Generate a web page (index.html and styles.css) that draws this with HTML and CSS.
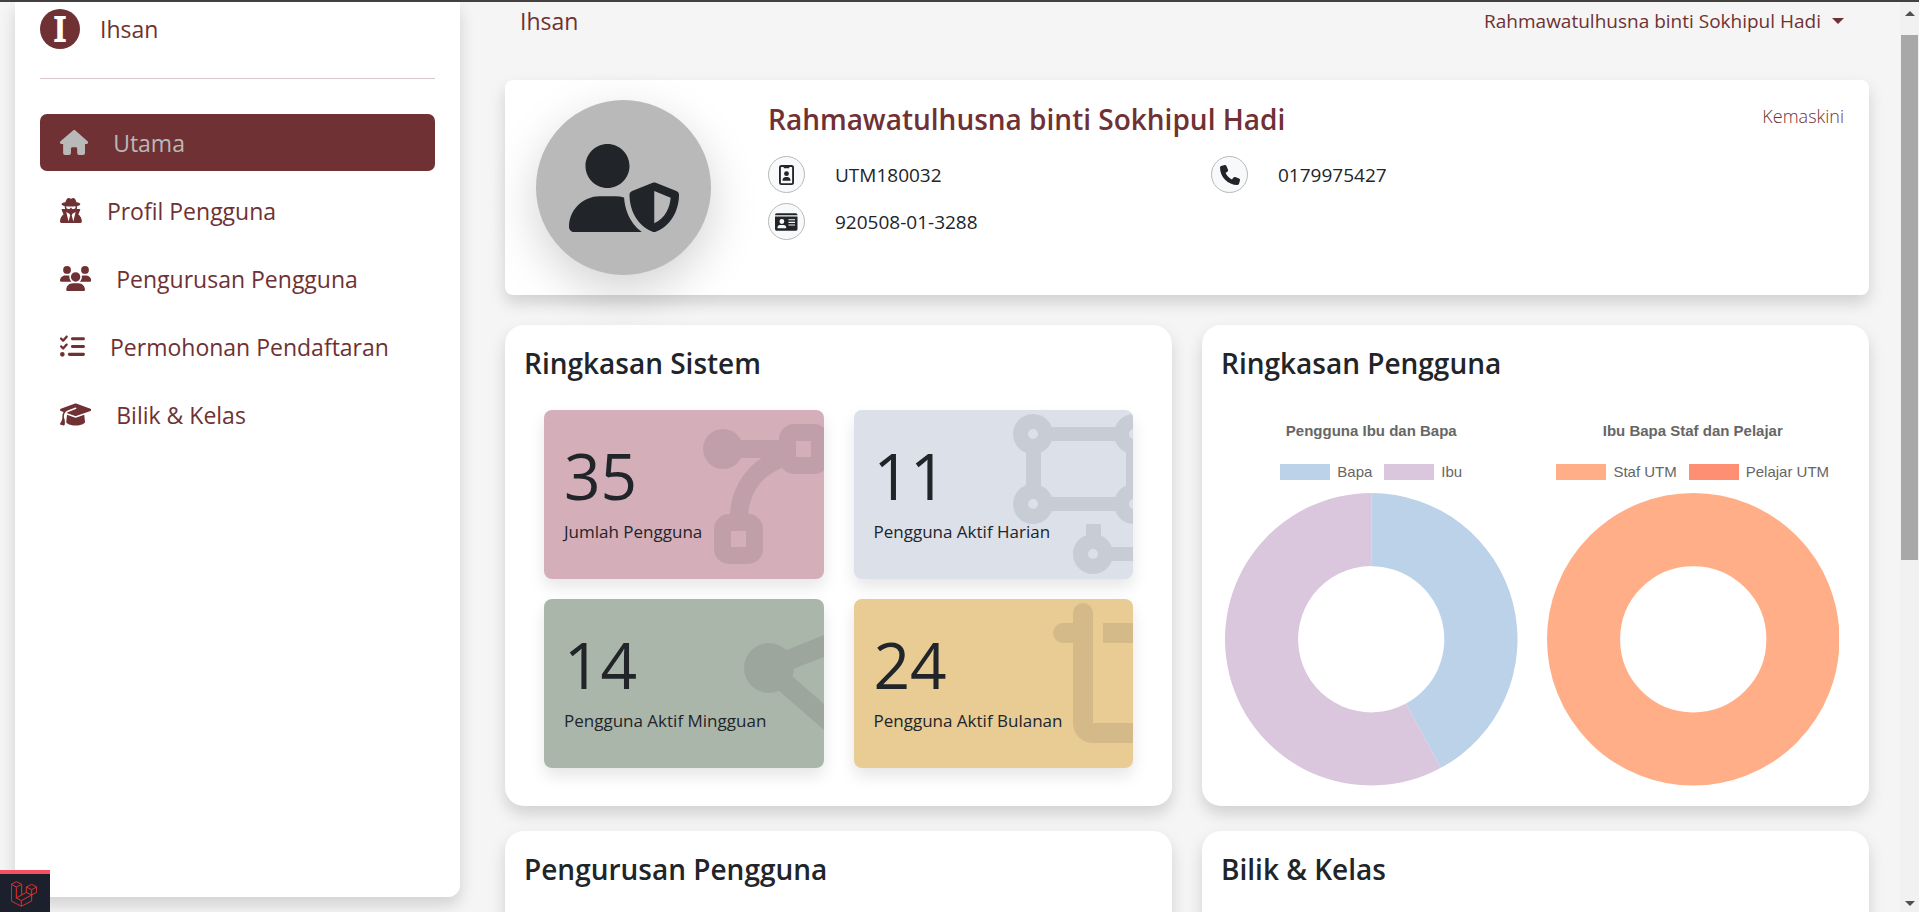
FILE: index.html
```html
<!DOCTYPE html>
<html lang="ms">
<head>
<meta charset="utf-8">
<meta name="viewport" content="width=device-width, initial-scale=1">
<title>Ihsan</title>
<link rel="stylesheet" href="styles.css">
</head>
<body>
<div class="shell">
  <div class="page">
    <div class="side-col">
      <aside class="sidebar">
        <a class="brand" href="#"><span class="brand-mark">I</span><span>Ihsan</span></a>
        <hr class="divider">
        <nav class="nav">
          <a class="nav-link active" href="#"><svg class="nav-icon" viewBox="0 0 576 512"><path d="M575.8 255.5c0 18-15 32.1-32 32.1h-32l.7 160.2c0 2.7-.2 5.4-.5 8.1V472c0 22.1-17.9 40-40 40H456c-1.1 0-2.2 0-3.3-.1c-1.4 .1-2.8 .1-4.2 .1H416 392c-22.1 0-40-17.9-40-40V448 384c0-17.7-14.3-32-32-32H256c-17.7 0-32 14.3-32 32v64 24c0 22.1-17.9 40-40 40H160 128.1c-1.5 0-3-.1-4.5-.2c-1.2 .1-2.4 .2-3.6 .2H104c-22.1 0-40-17.9-40-40V360c0-.9 0-1.9 .1-2.8V287.6H32c-18 0-32-14-32-32.1c0-9 3-17 10-24L266.4 8c7-7 15-8 22-8s15 2 21 7L564.8 231.5c8 7 12 15 11 24z"/></svg><span>Utama</span></a>
          <a class="nav-link" href="#"><svg class="nav-icon" viewBox="0 0 448 512"><path d="M224 16c-6.7 0-10.8-2.8-15.5-6.1C201.9 5.4 194 0 176 0c-30.5 0-52 43.7-66 89.4C62.7 98.1 32 112.2 32 128c0 14.3 25 27.1 64.6 35.9c-.4 4-.6 8-.6 12.1c0 17 3.3 33.2 9.3 48H45.4C38 224 32 230 32 237.4c0 1.7 .3 3.4 1 5l38.8 96.9C28.2 371.8 0 423.8 0 482.3C0 498.7 13.3 512 29.7 512H418.3c16.4 0 29.7-13.3 29.7-29.7c0-58.5-28.2-110.4-71.7-143L415 242.4c.6-1.6 1-3.3 1-5c0-7.4-6-13.4-13.4-13.4H342.7c6-14.8 9.3-31 9.3-48c0-4.1-.2-8.1-.6-12.1C391 155.1 416 142.3 416 128c0-15.8-30.7-29.9-78-38.6C324 43.7 302.5 0 272 0c-18 0-25.9 5.4-32.5 9.9c-4.8 3.3-8.8 6.1-15.5 6.1zm56 208H267.6c-16.5 0-31.1-10.6-36.3-26.2c-2.3-7-12.2-7-14.5 0c-5.2 15.6-19.9 26.2-36.3 26.2H168c-22.1 0-40-17.9-40-40V169.6c28.2 4.1 61 6.4 96 6.4s67.8-2.3 96-6.4V184c0 22.1-17.9 40-40 40zm-88 96l16 32L176 480 128 288l64 32zm128-32L272 480 240 352l16-32 64-32z"/></svg><span>Profil Pengguna</span></a>
          <a class="nav-link" href="#"><svg class="nav-icon" viewBox="0 0 640 512"><path d="M144 0a80 80 0 1 1 0 160A80 80 0 1 1 144 0zM512 0a80 80 0 1 1 0 160A80 80 0 1 1 512 0zM0 298.7C0 239.8 47.8 192 106.7 192h42.7c15.9 0 31 3.5 44.6 9.7c-1.3 7.2-1.9 14.7-1.9 22.3c0 38.2 16.8 72.5 43.3 96c-.2 0-.4 0-.7 0H21.3C9.6 320 0 310.4 0 298.7zM405.3 320c-.2 0-.4 0-.7 0c26.6-23.5 43.3-57.8 43.3-96c0-7.6-.7-15-1.9-22.3c13.6-6.3 28.7-9.7 44.6-9.7h42.7C592.2 192 640 239.8 640 298.7c0 11.8-9.6 21.3-21.3 21.3H405.3zM224 224a96 96 0 1 1 192 0 96 96 0 1 1 -192 0zM128 485.3C128 411.7 187.7 352 261.3 352H378.7C452.3 352 512 411.7 512 485.3c0 14.7-11.9 26.7-26.7 26.7H154.7c-14.7 0-26.7-11.9-26.7-26.7z"/></svg><span>Pengurusan Pengguna</span></a>
          <a class="nav-link" href="#"><svg class="nav-icon" viewBox="0 0 512 512"><path d="M152.1 38.2c9.9 8.9 10.7 24 1.8 33.9l-72 80c-4.4 4.9-10.6 7.8-17.2 7.9s-12.9-2.4-17.6-7L7 113C-2.3 103.6-2.3 88.4 7 79s24.6-9.4 33.9 0l22.1 22.1 55.1-61.2c8.9-9.9 24-10.7 33.9-1.8zm0 160c9.9 8.9 10.7 24 1.8 33.9l-72 80c-4.4 4.9-10.6 7.8-17.2 7.9s-12.9-2.4-17.6-7L7 273c-9.4-9.4-9.4-24.6 0-33.9s24.6-9.4 33.9 0l22.1 22.1 55.1-61.2c8.9-9.9 24-10.7 33.9-1.8zM224 96c0-17.7 14.3-32 32-32H480c17.7 0 32 14.3 32 32s-14.3 32-32 32H256c-17.7 0-32-14.3-32-32zm0 160c0-17.7 14.3-32 32-32H480c17.7 0 32 14.3 32 32s-14.3 32-32 32H256c-17.7 0-32-14.3-32-32zM160 416c0-17.7 14.3-32 32-32H480c17.7 0 32 14.3 32 32s-14.3 32-32 32H192c-17.7 0-32-14.3-32-32zM48 368a48 48 0 1 1 0 96 48 48 0 1 1 0-96z"/></svg><span>Permohonan Pendaftaran</span></a>
          <a class="nav-link" href="#"><svg class="nav-icon" viewBox="0 0 640 512"><path d="M320 32c-8.1 0-16.1 1.4-23.7 4.1L15.8 137.4C6.3 140.9 0 149.9 0 160s6.3 19.1 15.8 22.6l57.9 20.9C57.3 229.3 48 259.8 48 291.9v28.1c0 28.4-10.8 57.7-22.3 80.8c-6.5 13-13.9 25.8-22.5 37.6C0 442.7-.9 448.3 .9 453.4s6 8.9 11.2 10.2l64 16c4.2 1.1 8.7 .3 12.4-2s6.3-6.1 7.1-10.4c8.6-42.8 4.3-81.2-2.1-108.7C90.3 344.3 86 329.8 80 316.5V291.9c0-30.2 10.2-58.7 27.9-81.5c12.9-15.5 29.6-28 49.2-35.7l157-61.7c8.2-3.2 17.5 .8 20.7 9s-.8 17.5-9 20.7l-157 61.7c-12.4 4.9-23.3 12.4-32.2 21.6l159.6 57.6c7.6 2.7 15.6 4.1 23.7 4.1s16.1-1.4 23.7-4.1L624.2 182.6c9.5-3.4 15.8-12.5 15.8-22.6s-6.3-19.1-15.8-22.6L343.7 36.1C336.1 33.4 328.1 32 320 32zM128 408c0 35.3 86 72 192 72s192-36.7 192-72L496.7 262.6 354.5 314c-11.1 4-22.8 6-34.5 6s-23.5-2-34.5-6L143.3 262.6 128 408z"/></svg><span>Bilik &amp; Kelas</span></a>
        </nav>
      </aside>
    </div>
    <main class="main">
      <header class="topbar">
        <a class="topbar-title" href="#">Ihsan</a>
        <button class="user-menu" type="button">Rahmawatulhusna binti Sokhipul Hadi<span class="caret"></span></button>
      </header>

      <section class="profile">
        <div class="avatar"><svg class="avatar-icon" viewBox="0 0 640 512"><path d="M224 256c70.7 0 128-57.3 128-128S294.7 0 224 0S96 57.3 96 128s57.3 128 128 128zm-45.7 48C79.8 304 0 383.8 0 482.3C0 498.7 13.3 512 29.7 512H418.3c1.8 0 3.5-.2 5.3-.5c-76.3-55.1-99.8-141-103.1-200.2c-16.1-4.8-33.1-7.3-50.7-7.3H178.3zm308.8-78.3l-120 48C358 277.4 352 286.2 352 296c0 63.3 25.9 168.8 134.8 214.2c5.9 2.5 12.6 2.5 18.5 0C614.1 464.8 640 359.3 640 296c0-9.8-6-18.6-15.1-22.3l-120-48c-5.7-2.3-12.1-2.3-17.8 0zM591.4 312c-3.9 50.7-27.2 116.7-95.4 149.7V273.8L591.4 312z"/></svg></div>
        <div class="profile-body">
          <div class="profile-head">
            <h1 class="profile-name">Rahmawatulhusna binti Sokhipul Hadi</h1>
            <a class="edit-link" href="#">Kemaskini</a>
          </div>
          <div class="facts">
            <div class="fact"><span class="fact-icon"><svg viewBox="0 0 384 512"><rect x="24" y="24" width="336" height="464" rx="40" fill="none" stroke="currentColor" stroke-width="48"/><path d="M120 20h144v48a16 16 0 0 1-16 16H136a16 16 0 0 1-16-16z"/><circle cx="192" cy="222" r="62"/><path d="M88 392c0-50 36-86 84-86h40c48 0 84 36 84 86 0 8-6 14-14 14H102c-8 0-14-6-14-14z"/></svg></span><span>UTM180032</span></div>
            <div class="fact"><span class="fact-icon"><svg viewBox="0 0 512 512"><path d="M164.9 24.6c-7.7-18.6-28-28.5-47.4-23.2l-88 24C12.1 30.2 0 46 0 64C0 311.4 200.6 512 448 512c18 0 33.8-12.1 38.6-29.5l24-88c5.3-19.4-4.6-39.7-23.2-47.4l-96-40c-16.3-6.8-35.2-2.1-46.3 11.6L304.7 368C234.3 334.7 177.3 277.7 144 207.3L193.3 167c13.7-11.2 18.4-30 11.6-46.3l-40-96z"/></svg></span><span>0179975427</span></div>
            <div class="fact"><span class="fact-icon"><svg viewBox="0 0 576 512"><path fill-rule="evenodd" d="M48 32h480c27 0 48 21 48 48H0c0-27 21-48 48-48zM0 118h576v314c0 27-21 48-48 48H48c-27 0-48-21-48-48zM176 182a62 62 0 1 0 0 124 62 62 0 1 0 0-124zM64 402c0 8 6 14 14 14h196c8 0 14-6 14-14 0-40-28-68-64-68h-96c-36 0-64 28-64 68zM344 184v28h168v-28zm0 68v28h168v-28zm0 68v28h168v-28z"/></svg></span><span>920508-01-3288</span></div>
          </div>
        </div>
      </section>

      <div class="panels">
        <section class="panel">
          <h2 class="panel-title">Ringkasan Sistem</h2>
          <div class="tiles">
            <article class="tile tile-rose">
              <svg class="tile-art" viewBox="140 0 140 169"><circle cx="179" cy="39" r="20"/><path d="M193 30h50v18h-50z"/><path fill-rule="evenodd" d="M250 14h20a15 15 0 0 1 15 15v20a15 15 0 0 1-15 15h-20a15 15 0 0 1-15-15V29a15 15 0 0 1 15-15zM252 31v16h15V31z"/><path fill-rule="evenodd" d="M185 104h19a15 15 0 0 1 15 15v20a15 15 0 0 1-15 15h-19a15 15 0 0 1-15-15v-20a15 15 0 0 1 15-15zM187 121v16h15v-16z"/><path d="M186 105C187 80 200 59 219 47L238 46V58C218 66 206 82 204 105Z"/></svg>
              <strong class="tile-value">35</strong><span class="tile-label">Jumlah Pengguna</span>
            </article>
            <article class="tile tile-blue">
              <svg class="tile-art" viewBox="140 0 140 169"><path d="M195 17h68v14h-68zM195 87h68v14h-68zM173 38h15v42h-15zM273 38h15v42h-15zM233 114h15v16h-15zM255 137h40v14h-40z"/><path fill-rule="evenodd" d="M180 4a20 20 0 1 1 0 40 20 20 0 1 1 0-40zm0 15a5 5 0 1 0 0 10 5 5 0 1 0 0-10zM281 4a20 20 0 1 1 0 40 20 20 0 1 1 0-40zm0 15a5 5 0 1 0 0 10 5 5 0 1 0 0-10zM180 74a20 20 0 1 1 0 40 20 20 0 1 1 0-40zm0 15a5 5 0 1 0 0 10 5 5 0 1 0 0-10zM281 74a20 20 0 1 1 0 40 20 20 0 1 1 0-40zm0 15a5 5 0 1 0 0 10 5 5 0 1 0 0-10zM240 124a20 20 0 1 1 0 40 20 20 0 1 1 0-40zm0 15a5 5 0 1 0 0 10 5 5 0 1 0 0-10z"/></svg>
              <strong class="tile-value">11</strong><span class="tile-label">Pengguna Aktif Harian</span>
            </article>
            <article class="tile tile-green">
              <svg class="tile-art" viewBox="140 0 140 169"><circle cx="225" cy="69" r="25"/><path d="M240 52L280 36V58L249 70 248 77 280 105V131L234 91Z"/></svg>
              <strong class="tile-value">14</strong><span class="tile-label">Pengguna Aktif Mingguan</span>
            </article>
            <article class="tile tile-amber">
              <svg class="tile-art" viewBox="140 0 140 169"><path d="M220 24V14a10 10 0 0 1 20 0V124H280V144H240a20 20 0 0 1-20-20V44H210a10 10 0 0 1 0-20zM250 24h30v20h-30z"/></svg>
              <strong class="tile-value">24</strong><span class="tile-label">Pengguna Aktif Bulanan</span>
            </article>
          </div>
        </section>

        <section class="panel">
          <h2 class="panel-title">Ringkasan Pengguna</h2>
          <div class="charts">
            <figure class="chart">
              <figcaption class="chart-title">Pengguna Ibu dan Bapa</figcaption>
              <ul class="legend"><li><i class="swatch sw-blue"></i>Bapa</li><li><i class="swatch sw-mauve"></i>Ibu</li></ul>
              <svg class="donut" viewBox="-146 -146 292 292"><path fill="#bbd2e9" d="M0-146A146 146 0 0 1 69.5 128.4L34.7 64.2A73 73 0 0 0 0-73Z"/><path fill="#dac6dd" d="M69.5 128.4A146 146 0 1 1 0-146V-73A73 73 0 1 0 34.7 64.2Z"/></svg>
            </figure>
            <figure class="chart">
              <figcaption class="chart-title">Ibu Bapa Staf dan Pelajar</figcaption>
              <ul class="legend"><li><i class="swatch sw-peach"></i>Staf UTM</li><li><i class="swatch sw-coral"></i>Pelajar UTM</li></ul>
              <svg class="donut" viewBox="-146 -146 292 292"><circle r="109.5" fill="none" stroke="#ffae87" stroke-width="73"/></svg>
            </figure>
          </div>
        </section>

        <section class="panel"><h2 class="panel-title">Pengurusan Pengguna</h2></section>
        <section class="panel"><h2 class="panel-title">Bilik &amp; Kelas</h2></section>
      </div>
    </main>
  </div>
  <div class="scrollbar"><i class="arrow-up"></i><div class="track"><div class="thumb"></div></div><i class="arrow-down"></i></div>
</div>
<button class="debug-badge" type="button" aria-label="Laravel"><svg viewBox="0 0 78 78"><path d="M16 2L32 10 16 18 1 10ZM1 10V60L31 76 62 60V42M16 18V51L31 59 62 42M32 10V42M16 51L46 34M31 59V76M62 10L77 18V34L62 42 46 34V18ZM46 18L62 26 77 18M62 26V42"/></svg></button>
</body>
</html>
```
FILE: styles.css
```css
* { box-sizing: border-box; }
body {
  margin: 0;
  background: #f5f5f5;
  color: #212529;
  font-family: "Open Sans", "Noto Sans", sans-serif;
  font-size: 19px;
}
a { color: inherit; text-decoration: none; }
button { border: 0; background: none; padding: 0; font: inherit; color: inherit; }
svg { display: block; fill: currentColor; }
h1, h2, figure, ul { margin: 0; padding: 0; }

.shell {
  display: flex;
  height: 100vh;
  overflow: hidden;
  border-top: 2px solid #454040;
}
.page {
  flex: 1;
  display: grid;
  grid-template-columns: minmax(0, 1fr) minmax(0, 3fr);
}

/* Sidebar */
.side-col { padding: 0 15px 15px; height: 100vh; }
.sidebar {
  height: calc(100vh - 17px);
  padding: 7px 25px;
  background: #fff;
  border-radius: 0 0 12px 12px;
  box-shadow: 0 8px 16px rgba(0, 0, 0, .15);
  color: #6f3133;
}
.brand { display: flex; align-items: center; gap: 20px; font-size: 23px; line-height: 40px; }
.brand-mark {
  display: grid;
  place-items: center;
  width: 40px;
  height: 40px;
  border-radius: 50%;
  background: #6f3133;
  color: #fff;
  font: 36px/40px "Liberation Serif", serif;
  -webkit-text-stroke: 2px #fff;
}
.divider { height: 1px; margin: 29px 0 35px; border: 0; background: #d8c7c8; }
.nav { display: flex; flex-direction: column; gap: 11px; }
.nav-link {
  display: flex;
  align-items: center;
  gap: 25px;
  height: 57px;
  padding: 0 20px;
  border-radius: 7px;
  font-size: 23px;
}
.nav-link.active { background: #6f3133; color: #b9b9b9; }
.nav-icon { height: 25px; }

/* Main column */
.main { padding: 0 31px 0 30px; }
.topbar {
  display: flex;
  justify-content: space-between;
  align-items: center;
  height: 38px;
  margin-bottom: 40px;
  padding: 0 25px 0 15px;
  color: #6f3133;
}
.topbar-title { font-size: 23px; }
.user-menu { display: flex; align-items: center; gap: 11px; }
.caret { border: 6px solid transparent; border-top-color: currentColor; border-bottom: 0; }

.profile {
  display: flex;
  gap: 57px;
  padding: 20px 25px 20px 31px;
  background: #fff;
  border-radius: 8px;
  box-shadow: 0 8px 16px rgba(0, 0, 0, .15);
}
.avatar {
  display: grid;
  place-items: center;
  width: 175px;
  height: 175px;
  border-radius: 50%;
  background: #b9b9b9;
  box-shadow: 0 16px 48px rgba(0, 0, 0, .175);
}
.avatar-icon { width: 110px; height: 88px; }
.profile-body { flex: 1; }
.profile-head { display: flex; justify-content: space-between; height: 38px; margin-bottom: 18px; color: #6f3133; }
.profile-name { font-size: 28px; font-weight: 600; line-height: 38px; }
.edit-link { font-size: 18px; font-weight: 300; line-height: 32px; }
.facts { display: grid; grid-template-columns: 443px 1fr; gap: 10px 0; }
.fact { display: flex; align-items: center; gap: 30px; }
.fact-icon {
  display: grid;
  place-items: center;
  width: 37px;
  height: 37px;
  border: 1px solid #b9b9b9;
  border-radius: 50%;
  background: #f8f9fa;
}
.fact-icon svg { height: 20px; }

/* Panels */
.panels { display: grid; grid-template-columns: 1fr 1fr; gap: 25px 30px; align-items: start; margin-top: 30px; }
.panel {
  min-height: 200px;
  padding: 18px 19px 20px;
  background: #fff;
  border-radius: 19px;
  box-shadow: 0 8px 16px rgba(0, 0, 0, .15);
}
.panels .panel { position: relative; }
.panel-title { font-size: 28px; font-weight: 600; line-height: 40px; }
.tiles { display: grid; grid-template-columns: 1fr 1fr; gap: 20px 30px; padding: 27px 20px 18px; }
.tile {
  position: relative;
  display: flex;
  flex-direction: column;
  height: 169px;
  padding: 22px 20px;
  overflow: hidden;
  border-radius: 8px;
  box-shadow: 0 8px 16px rgba(0, 0, 0, .1);
}
.tile-rose { background: #d4aeb9; }
.tile-blue { background: #dce0e9; }
.tile-green { background: #abb6ab; }
.tile-amber { background: #e8cc94; }
.tile-art { position: absolute; top: 0; right: 0; width: 140px; height: 169px; opacity: .1; }
.tile-value { position: relative; font-size: 64px; font-weight: 400; line-height: 88px; }
.tile-label { position: relative; font-size: 17px; line-height: 23px; }

.charts { display: grid; grid-template-columns: 1fr 1fr; gap: 29px; padding: 39px 11px 0 4px; }
.chart { color: #666; font-family: "Liberation Sans", Arial, sans-serif; font-size: 15px; line-height: 18px; }
.chart-title { text-align: center; font-weight: 700; }
.legend { display: flex; justify-content: center; gap: 12px; margin: 23px 0 12px; list-style: none; }
.legend li { display: flex; align-items: center; gap: 7px; white-space: nowrap; }
.swatch { width: 50px; height: 16px; }
.sw-blue { background: #bbd2e9; }
.sw-mauve { background: #dac6dd; }
.sw-peach { background: #ffae87; }
.sw-coral { background: #ff8f73; }
.donut { width: 100%; }

/* Scroll bar */
.scrollbar { display: flex; flex-direction: column; align-items: center; width: 19px; padding: 9px 0 6px; background: #f1f1f1; }
.track { flex: 1; width: 17px; padding: 19px 0; }
.thumb { height: 62%; background: #a8a8a8; }
.arrow-up { border: 5px solid transparent; border-top: 0; border-bottom-color: #505050; }
.arrow-down { border: 5px solid transparent; border-bottom: 0; border-top-color: #505050; }

.debug-badge {
  position: fixed;
  left: 0;
  bottom: 0;
  width: 50px;
  height: 42px;
  padding: 7px 11px;
  border-top: 4px solid #f9505f;
  background: #1b202c;
}
.debug-badge svg { width: 26px; height: 26px; fill: none; stroke: #e2302b; stroke-width: 3; }
```
